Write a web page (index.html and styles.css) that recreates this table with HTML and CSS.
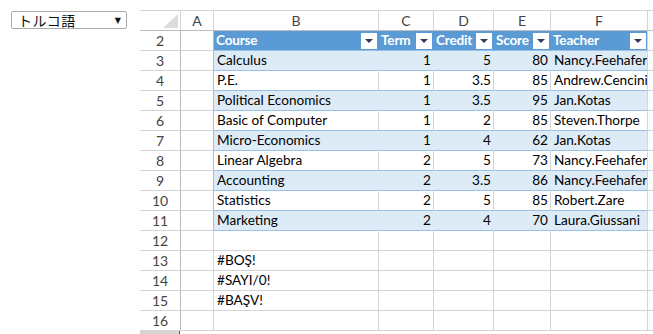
FILE: index.html
```html
<!DOCTYPE html>
<html lang="tr">
<head>
<meta charset="utf-8">
<title>Sheet</title>
<link rel="stylesheet" href="styles.css">
</head>
<body>
<div class="page">
  <div class="side">
    <div class="dropdown"><span class="dd-text">トルコ語</span><span class="dd-arrow">▼</span></div>
  </div>
  <div class="sheetwrap">
    <div class="sheet">
      <div class="corner"><span class="tri"></span></div>
      <div class="ch">A</div><div class="ch">B</div><div class="ch">C</div><div class="ch">D</div><div class="ch">E</div><div class="ch">F</div><div class="ch last"></div>

      <div class="rh">2</div><div class="c tl"></div>
      <div class="c th"><span>Course</span><span class="fb"></span></div>
      <div class="c th"><span>Term</span><span class="fb"></span></div>
      <div class="c th"><span>Credit</span><span class="fb"></span></div>
      <div class="c th"><span>Score</span><span class="fb"></span></div>
      <div class="c th tr"><span>Teacher</span><span class="fb"></span></div>
      <div class="c last"></div>

      <div class="rh">3</div><div class="c tl"></div>
      <div class="c band">Calculus</div><div class="c band num">1</div><div class="c band num">5</div><div class="c band num">80</div><div class="c band tr">Nancy.Feehafer</div><div class="c last"></div>

      <div class="rh">4</div><div class="c tl"></div>
      <div class="c plain">P.E.</div><div class="c plain num">1</div><div class="c plain num">3.5</div><div class="c plain num">85</div><div class="c plain tr">Andrew.Cencini</div><div class="c last"></div>

      <div class="rh">5</div><div class="c tl"></div>
      <div class="c band">Political Economics</div><div class="c band num">1</div><div class="c band num">3.5</div><div class="c band num">95</div><div class="c band tr">Jan.Kotas</div><div class="c last"></div>

      <div class="rh">6</div><div class="c tl"></div>
      <div class="c plain">Basic of Computer</div><div class="c plain num">1</div><div class="c plain num">2</div><div class="c plain num">85</div><div class="c plain tr">Steven.Thorpe</div><div class="c last"></div>

      <div class="rh">7</div><div class="c tl"></div>
      <div class="c band">Micro-Economics</div><div class="c band num">1</div><div class="c band num">4</div><div class="c band num">62</div><div class="c band tr">Jan.Kotas</div><div class="c last"></div>

      <div class="rh">8</div><div class="c tl"></div>
      <div class="c plain">Linear Algebra</div><div class="c plain num">2</div><div class="c plain num">5</div><div class="c plain num">73</div><div class="c plain tr">Nancy.Feehafer</div><div class="c last"></div>

      <div class="rh">9</div><div class="c tl"></div>
      <div class="c band">Accounting</div><div class="c band num">2</div><div class="c band num">3.5</div><div class="c band num">86</div><div class="c band tr">Nancy.Feehafer</div><div class="c last"></div>

      <div class="rh">10</div><div class="c tl"></div>
      <div class="c plain">Statistics</div><div class="c plain num">2</div><div class="c plain num">5</div><div class="c plain num">85</div><div class="c plain tr">Robert.Zare</div><div class="c last"></div>

      <div class="rh">11</div><div class="c tl"></div>
      <div class="c band">Marketing</div><div class="c band num">2</div><div class="c band num">4</div><div class="c band num">70</div><div class="c band tr">Laura.Giussani</div><div class="c last"></div>

      <div class="rh">12</div><div class="c"></div><div class="c"></div><div class="c"></div><div class="c"></div><div class="c"></div><div class="c"></div><div class="c last"></div>
      <div class="rh">13</div><div class="c"></div><div class="c">#BOŞ!</div><div class="c"></div><div class="c"></div><div class="c"></div><div class="c"></div><div class="c last"></div>
      <div class="rh">14</div><div class="c"></div><div class="c">#SAYI/0!</div><div class="c"></div><div class="c"></div><div class="c"></div><div class="c"></div><div class="c last"></div>
      <div class="rh">15</div><div class="c"></div><div class="c">#BAŞV!</div><div class="c"></div><div class="c"></div><div class="c"></div><div class="c"></div><div class="c last"></div>
      <div class="rh">16</div><div class="c"></div><div class="c"></div><div class="c"></div><div class="c"></div><div class="c"></div><div class="c"></div><div class="c last"></div>
    </div>
    <div class="bottombar"><span class="bar"></span></div>
  </div>
</div>
</body>
</html>
```

FILE: styles.css
```css
* { box-sizing: border-box; }
html, body { margin: 0; padding: 0; background: #fff; }
body {
  font-family: Lato, "Open Sans", "Liberation Sans", sans-serif;
  font-size: 13.6px;
  color: #000;
  overflow: hidden;
}
.page {
  display: flex;
  width: 653px;
  height: 334px;
}
.side {
  width: 140px;
  flex: none;
  padding: 11px 0 0 11px;
}
.dropdown {
  width: 116px;
  height: 18px;
  border: 1px solid #ababab;
  border-radius: 2px;
  display: flex;
  align-items: center;
  justify-content: space-between;
  padding: 0 5px 0 6px;
}
.dd-text {
  font-family: "Noto Sans CJK JP", sans-serif;
  font-size: 14px;
  letter-spacing: 0.5px;
  line-height: 16px;
  color: #111;
}
.dd-arrow {
  font-family: "DejaVu Sans", sans-serif;
  font-size: 8px;
  color: #111;
}
.sheetwrap {
  flex: 1;
  padding-top: 10px;
  display: flex;
  flex-direction: column;
  overflow: hidden;
}
.sheet {
  display: grid;
  grid-template-columns: 41px 33px 165px 55px 60px 57px 97px 60px;
  grid-auto-rows: 20px;
  border-top: 1px solid #d4d4d4;
}
.sheet > div {
  border-right: 1px solid #d4d4d4;
  border-bottom: 1px solid #d4d4d4;
  line-height: 19px;
  white-space: nowrap;
  overflow: hidden;
}
.corner {
  display: flex;
  align-items: flex-end;
  justify-content: flex-end;
  padding: 0 2px 2px 0;
  border-bottom-color: #bdbdbd !important;
}
.tri {
  width: 0;
  height: 0;
  border-left: 15px solid transparent;
  border-bottom: 14px solid #dcdcdc;
}
.ch {
  text-align: center;
  color: #444;
  font-size: 14px;
  border-bottom-color: #bdbdbd !important;
}
.rh {
  text-align: center;
  color: #444;
  font-size: 14px;
  border-right-color: #bdbdbd !important;
}
.last { border-right: none !important; }
.c { padding: 0 2px 0 3px; }
.num { text-align: right; padding-right: 2px; }
.tl { border-right-color: #9bc2e6 !important; }
.th {
  background: #5b9bd5;
  color: #fff;
  font-weight: bold;
  display: flex;
  align-items: center;
  justify-content: space-between;
  padding: 0 1px 0 2px;
  letter-spacing: -0.2px;
  border-right-color: #5b9bd5 !important;
  border-bottom-color: #9bc2e6 !important;
}
.fb {
  width: 16px;
  height: 16px;
  background: #fff;
  display: flex;
  align-items: center;
  justify-content: center;
  flex: none;
}
.fb::after {
  content: "";
  width: 0;
  height: 0;
  border-left: 4px solid transparent;
  border-right: 4px solid transparent;
  border-top: 4px solid #2f3f5a;
  margin-top: 1px;
}
.band {
  background: #ddebf7;
  border-right-color: #ddebf7 !important;
  border-bottom-color: #9bc2e6 !important;
}
.plain {
  border-bottom-color: #9bc2e6 !important;
}
.tr { border-right-color: #c9d9ea !important; }
.bottombar {
  height: 4px;
  display: flex;
}
.bar {
  width: 40px;
  height: 4px;
  background: #d6d6d6;
  border-right: 1px solid #217346;
}
```
